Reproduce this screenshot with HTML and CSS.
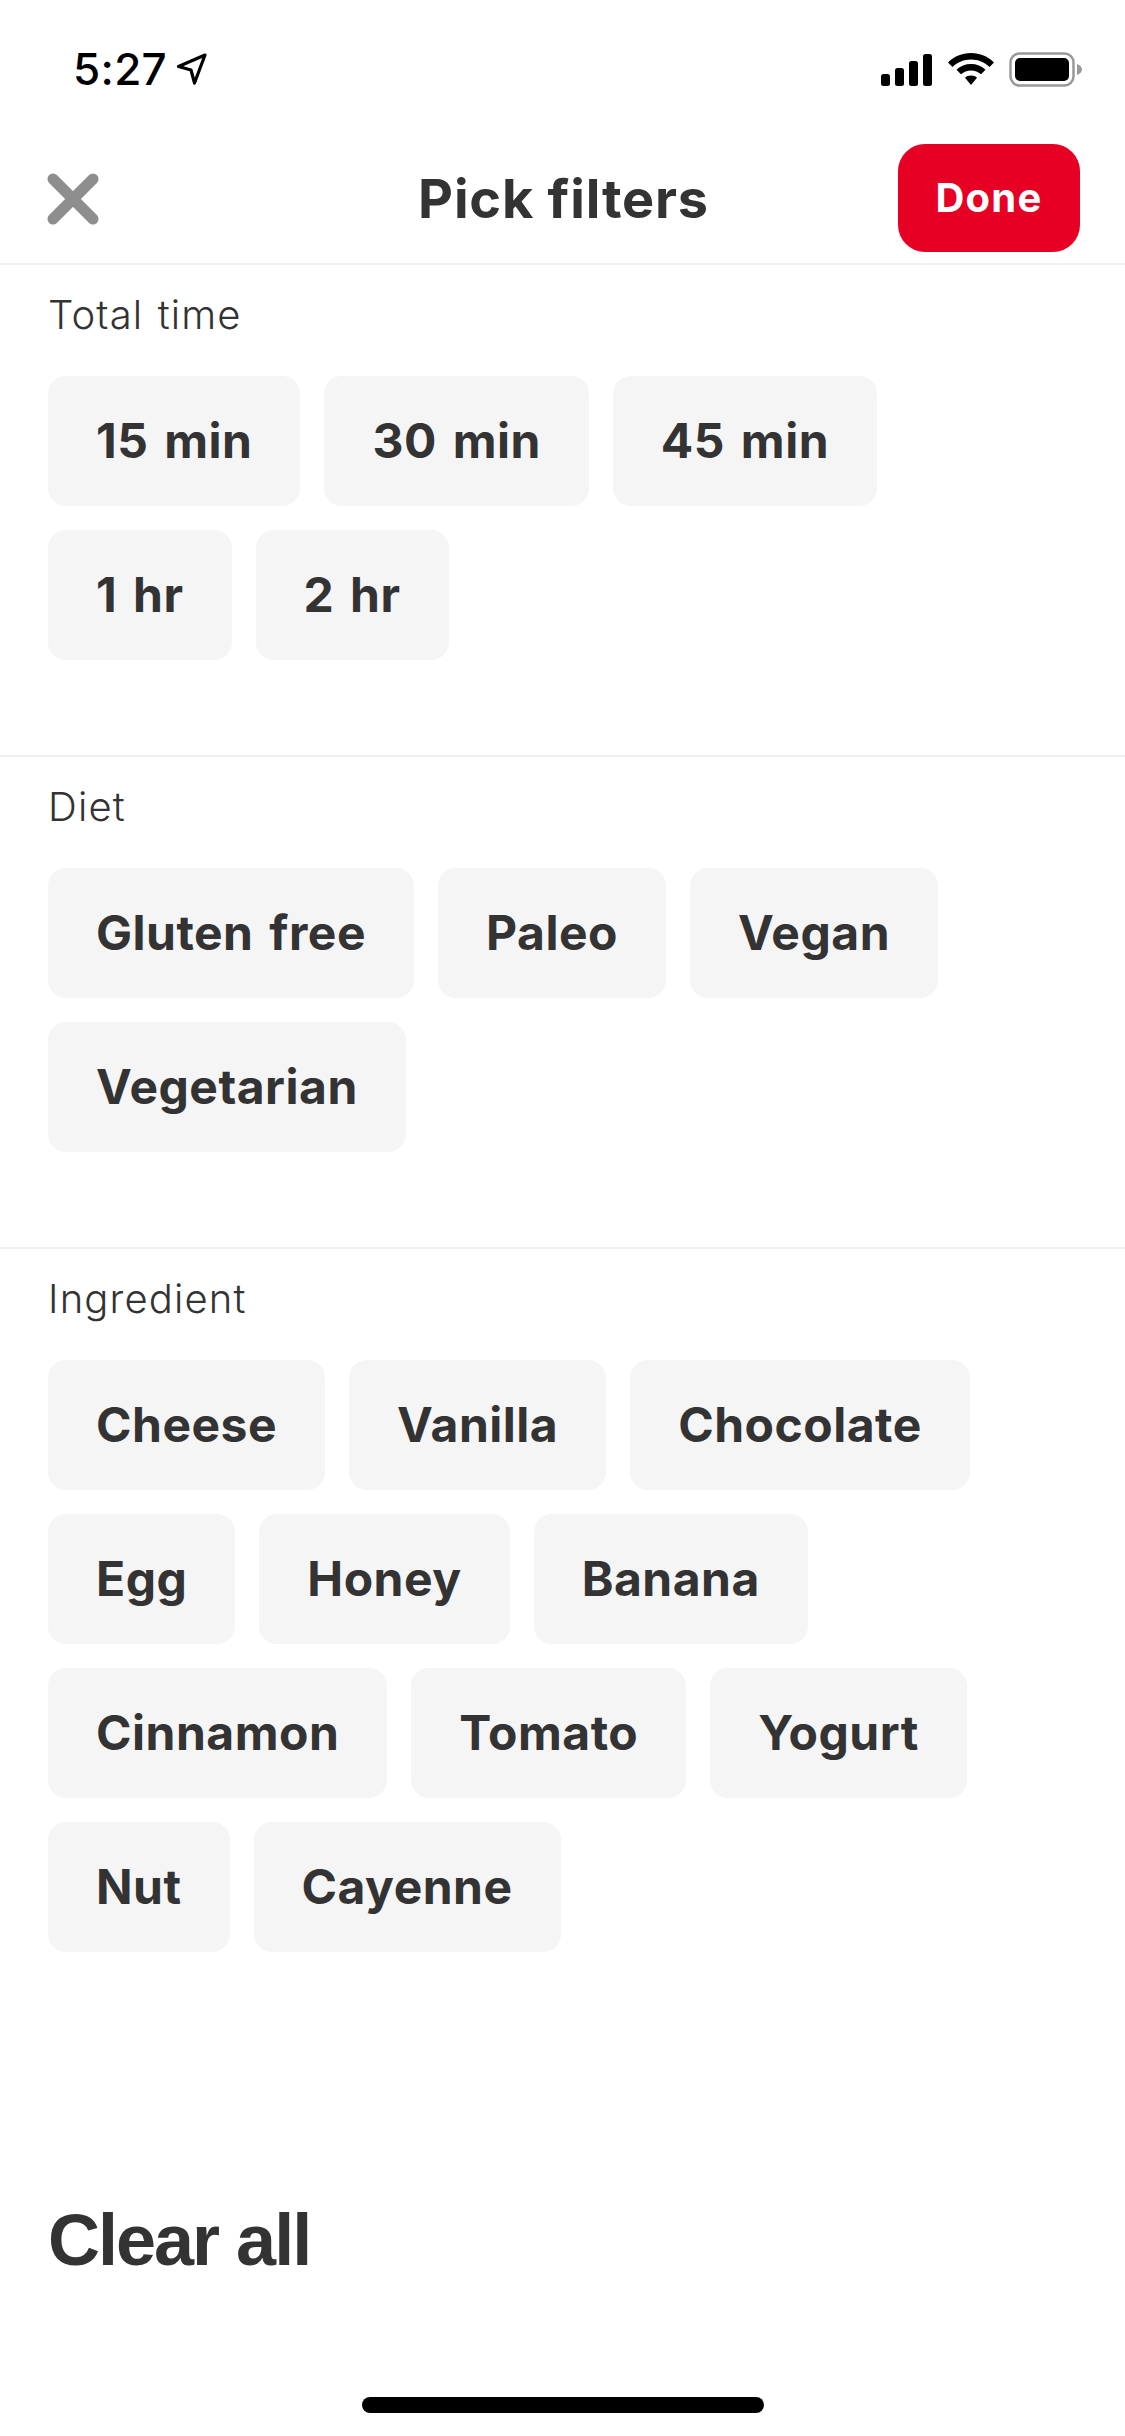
FILE: index.html
```html
<!DOCTYPE html>
<html lang="en">
<head>
<meta charset="utf-8">
<title>Pick filters</title>
<link rel="stylesheet" href="styles.css">
</head>
<body>
<div class="screen">
  <div class="status">
    <div class="status-left">
      <span class="clock">5:27</span>
      <svg class="loc" width="32" height="34" viewBox="0 0 32 34"><path d="M29 3 L2.500 14.500 L15 18 L18.500 31 Z" fill="none" stroke="#000" stroke-width="3.200" stroke-linejoin="round"/></svg>
    </div>
    <div class="status-right">
      <svg width="52" height="33" viewBox="0 0 52 33"><rect x="0" y="21" width="9" height="12" rx="2.5"/><rect x="14" y="15" width="9" height="18" rx="2.5"/><rect x="28" y="8" width="9" height="25" rx="2.5"/><rect x="42" y="1" width="9" height="32" rx="2.5"/></svg>
      <svg width="46" height="33" viewBox="0 0 46 33"><path d="M23 0 C32 0 40 3.500 46 9.500 L41.500 14 C36.500 9.200 30 6.500 23 6.500 C16 6.500 9.500 9.200 4.500 14 L0 9.500 C6 3.500 14 0 23 0 Z"/><path d="M23 11 C28.500 11 33.700 13 37.500 16.800 L33 21.300 C30.300 18.800 26.800 17.400 23 17.400 C19.200 17.400 15.700 18.800 13 21.300 L8.500 16.800 C12.300 13 17.500 11 23 11 Z"/><path d="M23 22.500 C25.500 22.500 27.600 23.400 29 24.800 L23 32 L17 24.800 C18.400 23.400 20.500 22.500 23 22.500 Z"/></svg>
      <svg width="73" height="35" viewBox="0 0 73 35"><rect x="1.500" y="1.500" width="63" height="32" rx="9" fill="none" stroke="#999" stroke-width="2.500"/><rect x="6" y="6" width="54" height="23" rx="5"/><path d="M68 12 C71 13 73 15 73 17.500 C73 20 71 22 68 23 Z" fill="#999"/></svg>
    </div>
  </div>

  <header class="topbar">
    <svg class="close" width="52" height="52" viewBox="0 0 52 52"><path d="M6 6 L46 46 M46 6 L6 46" fill="none" stroke="#8e8e8e" stroke-width="11" stroke-linecap="round"/></svg>
    <h1 class="title">Pick filters</h1>
    <button class="done">Done</button>
  </header>

  <section class="group">
    <div class="label">Total time</div>
    <div class="chips">
      <span class="chip">15 min</span><span class="chip">30 min</span><span class="chip">45 min</span><span class="chip">1 hr</span><span class="chip">2 hr</span>
    </div>
  </section>

  <section class="group">
    <div class="label">Diet</div>
    <div class="chips">
      <span class="chip">Gluten free</span><span class="chip">Paleo</span><span class="chip">Vegan</span><span class="chip">Vegetarian</span>
    </div>
  </section>

  <section class="group last">
    <div class="label">Ingredient</div>
    <div class="chips">
      <span class="chip">Cheese</span><span class="chip">Vanilla</span><span class="chip">Chocolate</span><span class="chip">Egg</span><span class="chip">Honey</span><span class="chip">Banana</span><span class="chip">Cinnamon</span><span class="chip">Tomato</span><span class="chip">Yogurt</span><span class="chip">Nut</span><span class="chip">Cayenne</span>
    </div>
  </section>

  <div class="clear">Clear all</div>
  <div class="home"></div>
</div>
</body>
</html>
```

FILE: styles.css
```css
* { box-sizing: border-box; }
html, body { margin: 0; padding: 0; background: #fff; }
.screen {
  width: 1125px;
  height: 2436px;
  display: flex;
  flex-direction: column;
  font-family: Inter, "Liberation Sans", sans-serif;
  color: #333;
}
.status {
  height: 144px;
  padding: 47px 43px 0 73px;
  display: flex;
  justify-content: space-between;
  align-items: flex-start;
}
.status-left { display: flex; align-items: center; gap: 9px; }
.clock { font-size: 44px; line-height: 44px; font-weight: 500; letter-spacing: 0.3px; color: #000; }
.status-right { display: flex; align-items: center; gap: 15px; padding-top: 5px; }
.topbar {
  height: 121px;
  padding: 0 45px;
  display: flex;
  align-items: center;
  justify-content: space-between;
  border-bottom: 2px solid #f0f0f0;
  position: relative;
}
.close { margin-top: -10px; margin-left: 2px; }
.title {
  position: absolute;
  left: 2px;
  right: 0;
  top: 24px;
  margin: 0;
  text-align: center;
  font-size: 54px;
  line-height: 62px;
  font-weight: 700;
  letter-spacing: 0.8px;
  color: #333;
}
.done {
  width: 182px;
  height: 108px;
  margin-top: -12px;
  border: 0;
  border-radius: 27px;
  background: #e60023;
  color: #fff;
  font-family: inherit;
  font-size: 40px;
  font-weight: 700;
  letter-spacing: 1.2px;
  padding: 0;
}
.group {
  height: 492px;
  padding: 26px 48px 0;
  border-bottom: 2px solid #f0f0f0;
}
.group.last { height: auto; border-bottom: 0; }
.label { font-size: 40px; line-height: 48px; font-weight: 350; letter-spacing: 1.15px; word-spacing: 2px; color: #333; margin-bottom: 37px; }
.chips { display: flex; flex-wrap: wrap; gap: 24px; }
.chip {
  height: 130px;
  padding: 0 48px 2px;
  display: flex;
  align-items: center;
  background: #f5f5f5;
  border-radius: 18px;
  font-size: 48px;
  font-weight: 650;
  letter-spacing: 0.5px;
  word-spacing: 4px;
  color: #333;
}
.clear {
  margin-top: auto;
  padding: 0 48px;
  font-family: "Liberation Sans", Arial, sans-serif;
  font-size: 72px;
  line-height: 80px;
  font-weight: 700;
  letter-spacing: -2px;
  color: #333;
  margin-bottom: 156px;
}
.home {
  position: absolute;
  left: 362px;
  top: 2397px;
  width: 402px;
  height: 16px;
  border-radius: 8px;
  background: #000;
}
```
